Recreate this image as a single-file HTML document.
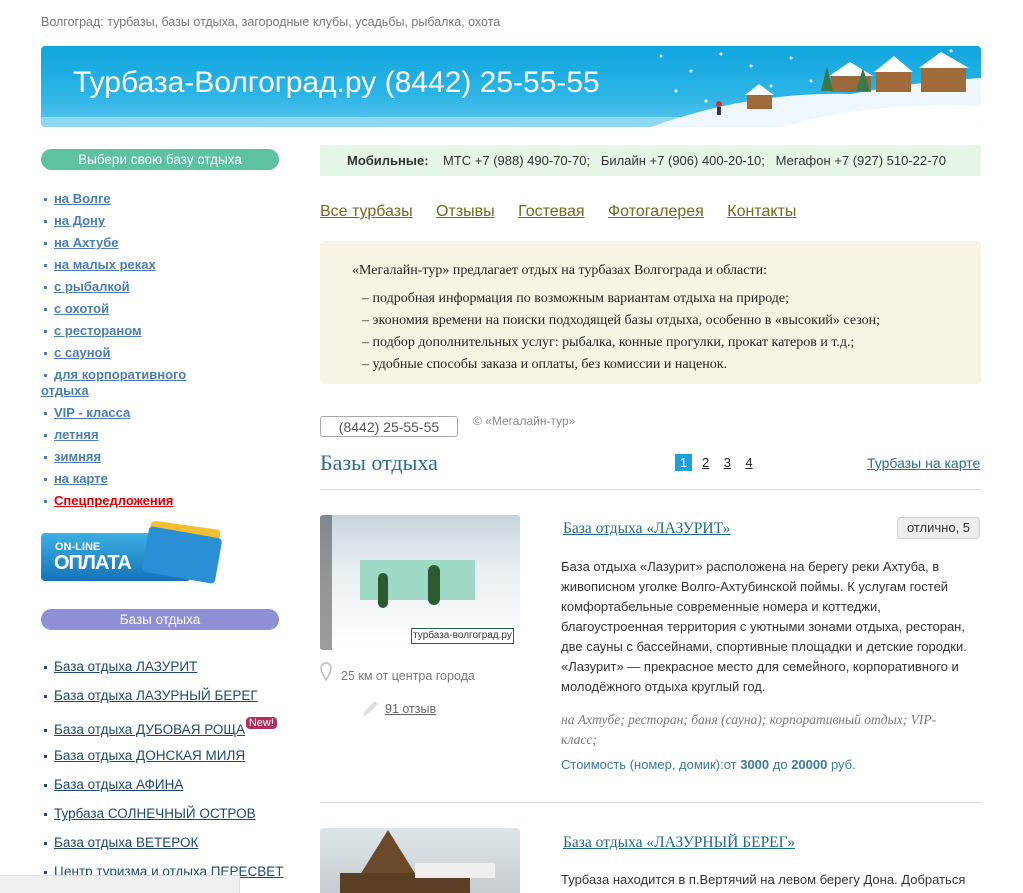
<!DOCTYPE html>
<html><head><meta charset="utf-8"><style>
*{margin:0;padding:0;box-sizing:border-box}
body{width:1023px;height:893px;overflow:hidden;background:#fff;font-family:"Liberation Sans",sans-serif;position:relative;color:#333}
.a{position:absolute}
a{color:inherit;text-decoration:underline}
.top{left:41px;top:15px;font-size:12.5px;color:#777}
.ban{left:41px;top:46px;width:940px;height:81px;border-radius:4px;overflow:hidden;background:linear-gradient(180deg,#0fa6de 0%,#2bb4e6 60%,#59c6ee 100%)}
.ban .strip{position:absolute;left:0;bottom:0;width:100%;height:10px;background:#8fd8f4}
.ban .t{position:absolute;left:32px;top:20px;font-size:30px;color:#fff}
.pill{left:41px;width:238px;height:21px;border-radius:11px;color:#fff;text-align:center;font-size:13.5px;line-height:21px}
.nav{left:44px;top:188px;font-size:13px;font-weight:bold;color:#4a7db0;line-height:22px}
.nav div span.b,.lst span.b{display:inline-block;width:3px;height:3px;background:#4a7db0;margin-right:7px;vertical-align:middle}
.lst{left:44px;top:652px;font-size:13.5px;color:#1d4a6a;line-height:29px}
.lst span.b{background:#1d4a6a}
.mob{left:320px;top:145px;width:661px;height:31px;background:#e6f6e6;font-size:13px;color:#333;line-height:31px;padding-left:27px;white-space:nowrap}
.menu{left:320px;top:203px;font-size:16px;color:#6e6a1e}
.menu a{margin-right:19px}
.info{left:320px;top:241px;width:661px;height:143px;background:#f8f4e3;border-radius:4px;font-family:"Liberation Serif",serif;font-size:14px;color:#222;padding:19px 0 0 32px;line-height:22px}
.info p{margin-bottom:6px}
.info div{padding-left:10px}
.h{left:320px;top:450px;font-family:"Liberation Serif",serif;font-size:22px;color:#2a6c8c}
hr{position:absolute;border:0;border-top:1px solid #ddd;left:320px;width:661px}
.t1{font-family:"Liberation Serif",serif;font-size:15.5px;color:#1e6a8a;text-decoration:underline}
.txt{font-size:13px;line-height:20px;color:#333}
</style></head><body>
<div class="a top">Волгоград: турбазы, базы отдыха, загородные клубы, усадьбы, рыбалка, охота</div>
<div class="a ban"><div class="strip"></div><div class="t">Турбаза-Волгоград.ру (8442) 25-55-55</div>
<svg style="position:absolute;left:610px;top:0" width="330" height="81">
<g fill="#fff"><circle cx="10" cy="10" r="1.5"/><circle cx="40" cy="25" r="1.5"/><circle cx="70" cy="8" r="1.5"/><circle cx="100" cy="20" r="1.5"/><circle cx="140" cy="12" r="1.5"/><circle cx="160" cy="35" r="1.5"/><circle cx="25" cy="45" r="1.5"/><circle cx="55" cy="55" r="1.5"/><circle cx="120" cy="40" r="1.5"/><circle cx="300" cy="5" r="1.5"/></g>
<path d="M0 81 Q100 45 200 48 Q270 35 330 32 L330 81 Z" fill="#eef7fc"/>
<path d="M130 81 Q220 55 330 60 L330 81Z" fill="#fff"/>
<rect x="96" y="48" width="25" height="15" fill="#a06a3a"/><path d="M94 49 L108 38 L123 49Z" fill="#fff"/>
<rect x="180" y="28" width="40" height="18" fill="#9a6a3c"/><path d="M178 30 L199 16 L222 30Z" fill="#fff"/>
<rect x="225" y="24" width="35" height="22" fill="#a06a3a"/><path d="M223 26 L243 10 L262 26Z" fill="#fff"/>
<rect x="270" y="20" width="45" height="26" fill="#a06a3a"/><path d="M268 22 L290 6 L318 22Z" fill="#fff"/>
<path d="M170 45 L176 20 L182 45Z M205 45 L212 22 L219 45Z" fill="#3a7a4a"/>
<circle cx="68" cy="58" r="3" fill="#c33"/><rect x="66" y="61" width="4" height="8" fill="#336"/>
</svg></div>

<div class="a pill" style="top:149px;background:#5cc2a2">Выбери свою базу отдыха</div>
<div class="a nav">
<div><span class="b"></span><a>на Волге</a></div>
<div><span class="b"></span><a>на Дону</a></div>
<div><span class="b"></span><a>на Ахтубе</a></div>
<div><span class="b"></span><a>на малых реках</a></div>
<div><span class="b"></span><a>с рыбалкой</a></div>
<div><span class="b"></span><a>с охотой</a></div>
<div><span class="b"></span><a>с рестораном</a></div>
<div><span class="b"></span><a>с сауной</a></div>
<div style="line-height:16px;padding-top:3px;padding-bottom:3px;margin-left:-3px;padding-left:3px"><span class="b"></span><a>для корпоративного</a><br><a style="margin-left:-3px">отдыха</a></div>
<div><span class="b"></span><a>VIP - класса</a></div>
<div><span class="b"></span><a>летняя</a></div>
<div><span class="b"></span><a>зимняя</a></div>
<div><span class="b"></span><a>на карте</a></div>
<div style="color:#d00"><span class="b"></span><a>Спецпредложения</a></div>
</div>
<div class="a" style="left:41px;top:533px;width:150px;height:48px;border-radius:4px;background:linear-gradient(180deg,#3cb0e4,#1574b8)"></div>
<div class="a" style="left:55px;top:541px;color:#fff;font-size:11px;font-weight:bold">ON-LINE</div>
<div class="a" style="left:54px;top:552px;color:#fff;font-size:20px;font-weight:bold;letter-spacing:-1px">ОПЛАТА</div>
<div class="a" style="left:148px;top:525px;width:70px;height:45px;border-radius:4px;background:#f4c030;transform:rotate(8deg)"></div>
<div class="a" style="left:145px;top:532px;width:74px;height:46px;border-radius:4px;background:#2a8fd4;transform:rotate(10deg)"></div>
<div class="a pill" style="top:609px;background:#8f8fd6">Базы отдыха</div>
<div class="a lst">
<div><span class="b"></span><a>База отдыха ЛАЗУРИТ</a></div>
<div><span class="b"></span><a>База отдыха ЛАЗУРНЫЙ БЕРЕГ</a></div>
<div style="margin-top:5px"><span class="b"></span><a>База отдыха ДУБОВАЯ РОЩА</a> <span style="background:#b0305a;color:#fff;font-size:11px;border-radius:4px;padding:0 3px;position:relative;top:-8px;margin-left:-3px">New!</span></div>
<div style="margin-top:-5px"><span class="b"></span><a>База отдыха ДОНСКАЯ МИЛЯ</a></div>
<div><span class="b"></span><a>База отдыха АФИНА</a></div>
<div><span class="b"></span><a>Турбаза СОЛНЕЧНЫЙ ОСТРОВ</a></div>
<div><span class="b"></span><a>База отдыха ВЕТЕРОК</a></div>
<div><span class="b"></span><a>Центр туризма и отдыха ПЕРЕСВЕТ</a></div>
</div>
<div class="a" style="left:0;top:875px;width:240px;height:18px;background:#f0f0f0;border-top:1px solid #ddd;border-right:1px solid #ddd"></div>

<div class="a mob"><b>Мобильные:</b>&nbsp;&nbsp;&nbsp; МТС +7 (988) 490-70-70; &nbsp;&nbsp;Билайн +7 (906) 400-20-10; &nbsp;&nbsp;Мегафон +7 (927) 510-22-70</div>
<div class="a menu"><a>Все турбазы</a> <a>Отзывы</a> <a>Гостевая</a> <a>Фотогалерея</a> <a>Контакты</a></div>
<div class="a info"><p>«Мегалайн-тур» предлагает отдых на турбазах Волгограда и области:</p>
<div>– подробная информация по возможным вариантам отдыха на природе;<br>– экономия времени на поиски подходящей базы отдыха, особенно в «высокий» сезон;<br>– подбор дополнительных услуг: рыбалка, конные прогулки, прокат катеров и т.д.;<br>– удобные способы заказа и оплаты, без комиссии и наценок.</div></div>
<div class="a" style="left:320px;top:416px;width:138px;height:21px;border:1px solid #aaa;border-radius:3px;font-size:14px;color:#555;text-align:center;line-height:20px">(8442) 25-55-55</div>
<div class="a" style="left:473px;top:414px;font-size:12px;color:#888">© «Мегалайн-тур»</div>
<div class="a h">Базы отдыха</div>
<div class="a" style="left:675px;top:454px;width:17px;height:17px;background:#1aa0dc;color:#fff;font-size:13px;text-align:center;line-height:17px">1</div>
<div class="a" style="left:702px;top:454px;font-size:13px;line-height:17px;color:#222"><u>2</u>&nbsp;&nbsp;&nbsp;&nbsp;<u>3</u>&nbsp;&nbsp;&nbsp;&nbsp;<u>4</u></div>
<div class="a" style="left:867px;top:455px;font-size:14px;color:#2a6c8c;text-decoration:underline">Турбазы на карте</div>
<hr style="top:489px">

<div class="a" style="left:320px;top:515px;width:200px;height:135px;border-radius:3px;background:linear-gradient(180deg,#c8d4dc 0%,#e8eef2 40%,#f4f6f8 70%,#fff 100%);overflow:hidden">
<div class="a" style="left:40px;top:45px;width:115px;height:40px;background:#9fd8c4"></div>
<div class="a" style="left:108px;top:50px;width:12px;height:40px;background:#2e5a32;border-radius:6px"></div>
<div class="a" style="left:58px;top:58px;width:10px;height:35px;background:#2e5a32;border-radius:5px"></div>
<div class="a" style="left:0;top:0;width:12px;height:135px;background:#3a3a3a;opacity:.5"></div>
<div class="a" style="left:91px;top:113px;width:103px;height:16px;background:#fff;border:1px solid #264;font-size:10px;text-align:center;line-height:14px">турбаза-волгоград.ру</div></div>
<div class="a" style="left:320px;top:662px;width:12px;height:20px"><svg width="12" height="20"><path d="M6 1a5 5 0 0 0-5 5c0 4 5 12 5 12s5-8 5-12a5 5 0 0 0-5-5z" fill="none" stroke="#bbb" stroke-width="1.5"/></svg></div>
<div class="a" style="left:341px;top:669px;font-size:12.5px;color:#777">25 км от центра города</div>
<div class="a" style="left:361px;top:700px"><svg width="18" height="18"><path d="M2 16 L4 11 L14 1 L17 4 L7 14 Z" fill="#ddd"/></svg></div>
<div class="a" style="left:385px;top:702px;font-size:12.5px;color:#666;text-decoration:underline">91 отзыв</div>
<div class="a t1" style="left:563px;top:520px">База отдыха «ЛАЗУРИТ»</div>
<div class="a" style="left:897px;top:517px;width:83px;height:22px;background:#eee;border:1px solid #ccc;border-radius:4px;font-size:13px;text-align:center;line-height:20px">отлично, 5</div>
<div class="a txt" style="left:561px;top:557px;width:410px">База отдыха «Лазурит» расположена на берегу реки Ахтуба, в живописном уголке Волго-Ахтубинской поймы. К услугам гостей комфортабельные современные номера и коттеджи, благоустроенная территория с уютными зонами отдыха, ресторан, две сауны с бассейнами, спортивные площадки и детские городки. «Лазурит» — прекрасное место для семейного, корпоративного и молодёжного отдыха круглый год.</div>
<div class="a" style="left:561px;top:710px;width:400px;font-family:'Liberation Serif',serif;font-style:italic;font-size:13.5px;color:#777;line-height:20px">на Ахтубе; ресторан; баня (сауна); корпоративный отдых; VIP-<br>класс;</div>
<div class="a" style="left:561px;top:757px;font-size:13px;color:#3a7a98">Стоимость (номер, домик):от <b>3000</b> до <b>20000</b> руб.</div>
<hr style="top:802px">
<div class="a" style="left:320px;top:828px;width:200px;height:65px;border-radius:3px 3px 0 0;background:linear-gradient(180deg,#dfe6ea,#c6ccd0);overflow:hidden">
<div class="a" style="left:40px;top:2px;width:0;height:0;border-left:28px solid transparent;border-right:28px solid transparent;border-bottom:45px solid #6a4a2a"></div>
<div class="a" style="left:20px;top:45px;width:130px;height:20px;background:#5a3f25"></div>
<div class="a" style="left:95px;top:35px;width:80px;height:15px;background:#eee"></div></div>
<div class="a t1" style="left:563px;top:834px">База отдыха «ЛАЗУРНЫЙ БЕРЕГ»</div>
<div class="a txt" style="left:561px;top:870px">Турбаза находится в п.Вертячий на левом берегу Дона. Добраться</div>
</body></html>
